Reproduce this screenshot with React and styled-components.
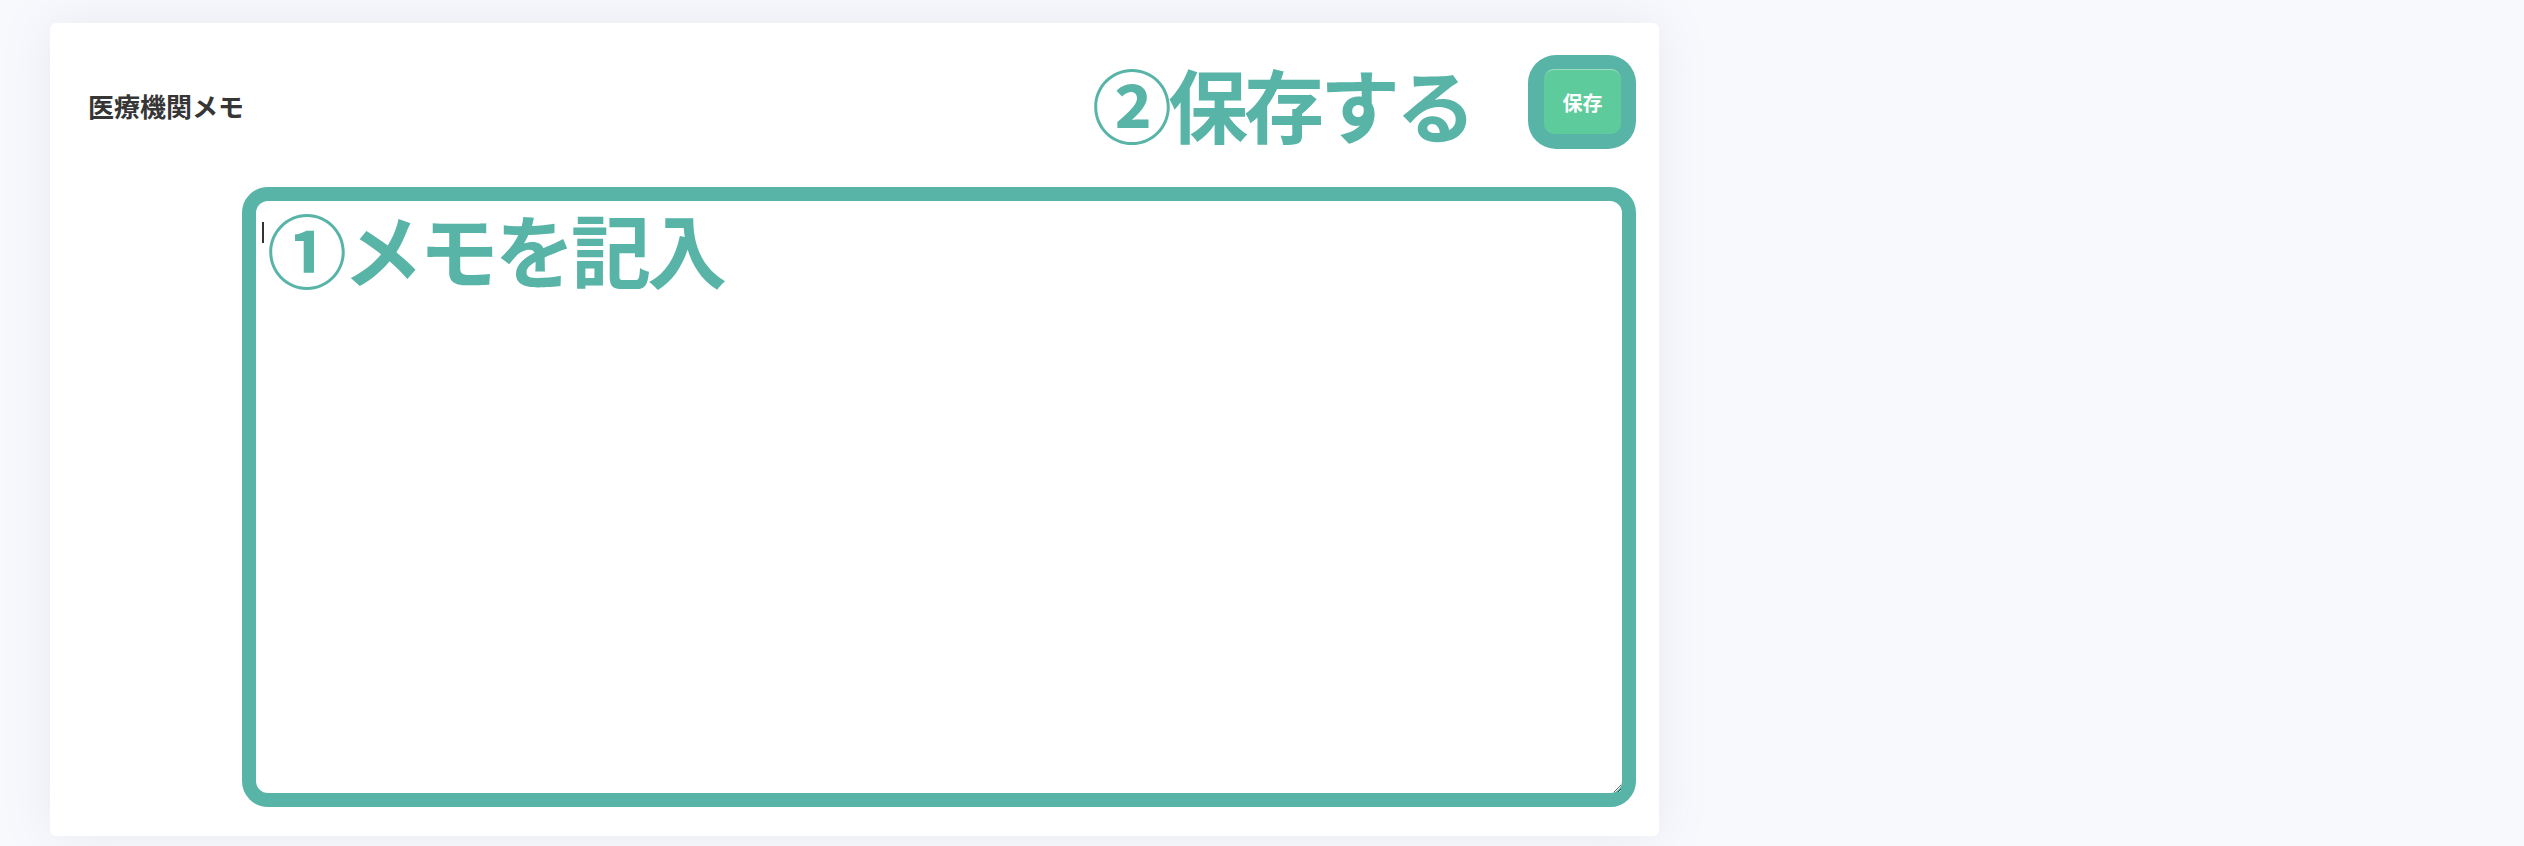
import React from "react";
import styled, { createGlobalStyle } from "styled-components";

const GlobalStyle = createGlobalStyle`
  * {
    box-sizing: border-box;
  }
  body {
    margin: 0;
    background-color: #f8f9fd;
    font-family: "Noto Sans CJK JP", "Noto Sans", sans-serif;
  }
`;

const teal = "#57b4a7";

const Page = styled.div`
  padding: 23px 0 10px 50px;
  width: 2524px;
  height: 846px;
`;

const Card = styled.section`
  width: 1609px;
  height: 813px;
  background-color: #fff;
  border-radius: 6px;
  box-shadow: 0 0 50px rgba(120, 128, 160, 0.13);
  padding: 32px 23px 29px 38px;
  display: flex;
  flex-direction: column;
  gap: 38px;
`;

const Header = styled.div`
  display: flex;
  align-items: center;
  justify-content: space-between;
  height: 94px;
`;

const Title = styled.h2`
  margin: 0;
  padding-top: 6px;
  font-size: 26px;
  font-weight: 700;
  color: #363636;
`;

const Actions = styled.div`
  display: flex;
  align-items: center;
  gap: 56px;
`;

// annotation text drawn over the screenshot
const Note = styled.span`
  font-size: 80px;
  font-weight: 700;
  line-height: 1;
  letter-spacing: -4px;
  color: ${teal};
  white-space: nowrap;
`;

const Highlight = styled.div`
  background-color: ${teal};
  border-radius: 28px;
  padding: 14px 15px 15px 16px;
  display: flex;
`;

const SaveButton = styled.button`
  width: 77px;
  height: 65px;
  border: none;
  border-top: 1px solid #9fdcbf;
  border-radius: 10px;
  background-color: #5dcb9b;
  color: #fff;
  font-family: "Noto Sans CJK JP", sans-serif;
  font-size: 20px;
  font-weight: 700;
  cursor: pointer;
`;

const Body = styled.div`
  flex: 1;
  margin-left: 154px;
  position: relative;
  display: flex;
`;

const MemoInput = styled.textarea`
  flex: 1;
  border: 14px solid ${teal};
  border-radius: 26px;
  padding: 5px 6px;
  font-family: "Noto Sans CJK JP", sans-serif;
  font-size: 16px;
  color: #333;
  outline: none;
  background: #fff;
`;

const Overlay = styled.div`
  position: absolute;
  left: 20px;
  top: 20px;
  display: flex;
  align-items: flex-start;
  pointer-events: none;
`;

const Caret = styled.span`
  width: 2px;
  height: 21px;
  margin-top: 15px;
  margin-right: 3px;
  background-color: #333;
`;

export default function App() {
  return (
    <>
      <GlobalStyle />
      <Page>
        <Card>
          <Header>
            <Title>医療機関メモ</Title>
            <Actions>
              <Note>②保存する</Note>
              <Highlight>
                <SaveButton type="button">保存</SaveButton>
              </Highlight>
            </Actions>
          </Header>
          <Body>
            <MemoInput />
            <Overlay>
              <Caret />
              <Note>①メモを記入</Note>
            </Overlay>
          </Body>
        </Card>
      </Page>
    </>
  );
}
